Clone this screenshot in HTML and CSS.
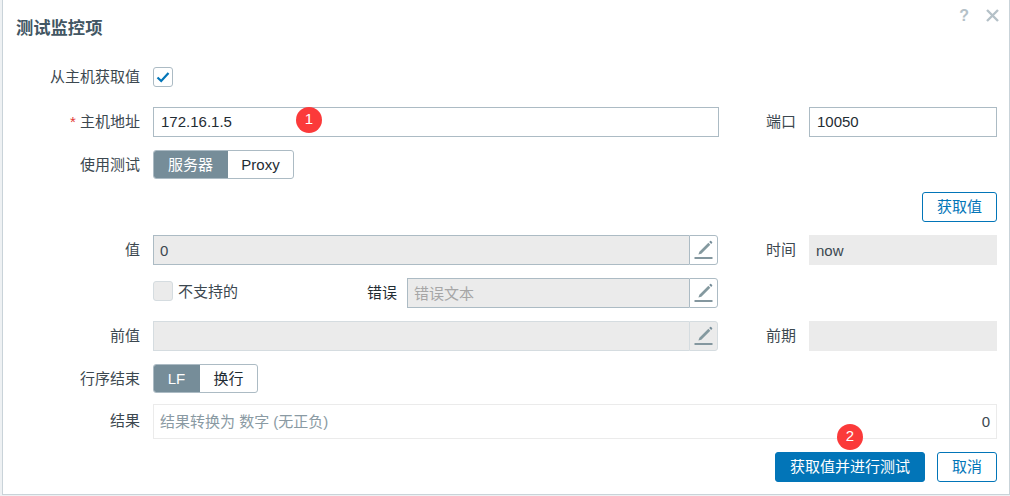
FILE: index.html
```html
<!DOCTYPE html>
<html lang="zh-CN">
<head>
<meta charset="utf-8">
<title>测试监控项</title>
<link rel="stylesheet" href="styles.css">
</head>
<body>
<svg class="sprite" width="0" height="0" aria-hidden="true">
  <symbol id="pencil" viewBox="0 0 20 20">
    <path d="M5.4 11.8 14.4 2.8l1.9 1.9L7.3 13.7l-2.9.9z" fill="#84999f"/>
    <path d="M15.2 2l.9-.9a.7.7 0 0 1 1 0l1 1a.7.7 0 0 1 0 1l-.9.9z" fill="#768d99"/>
    <rect x="0.5" y="17" width="18" height="2" fill="#84979f"/>
  </symbol>
</svg>
<main class="dialog">
  <header class="head">
    <h1 class="title">测试监控项</h1>
    <div class="head-tools">
      <span class="help">?</span>
      <svg class="close" viewBox="0 0 13 13" width="13" height="13"><path d="M1 1l11 11M12 1 1 12" stroke="#b5c1c8" stroke-width="2.4" fill="none"/></svg>
    </div>
  </header>
  <form class="form">
    <div class="row row-first">
      <label class="label">从主机获取值</label>
      <span class="check">
        <svg viewBox="0 0 14 12" width="14" height="12"><path d="M1.5 6.5 5.2 10 12.5 2" stroke="#0275b8" stroke-width="2.2" fill="none"/></svg>
      </span>
    </div>
    <div class="row">
      <label class="label"><span class="req">*</span> 主机地址</label>
      <div class="field field-main">172.16.1.5<span class="badge badge-one">1</span></div>
      <label class="label-side">端口</label>
      <div class="field field-side">10050</div>
    </div>
    <div class="row row-toggle">
      <label class="label">使用测试</label>
      <div class="toggle">
        <span class="opt opt-on opt-server">服务器</span>
        <span class="opt opt-proxy">Proxy</span>
      </div>
    </div>
    <div class="row row-end">
      <button type="button" class="btn btn-get">获取值</button>
    </div>
    <div class="row">
      <label class="label">值</label>
      <div class="combo combo-main">
        <div class="field field-off field-grow">0</div>
        <span class="pen"><svg width="20" height="20"><use href="#pencil"/></svg></span>
      </div>
      <label class="label-side">时间</label>
      <div class="field field-side field-off field-plain">now</div>
    </div>
    <div class="row">
      <span class="label"></span>
      <div class="unsupported">
        <span class="check check-off"></span>
        <span class="check-text">不支持的</span>
      </div>
      <label class="label-error">错误</label>
      <div class="combo combo-error">
        <div class="field field-off field-grow field-hint">错误文本</div>
        <span class="pen"><svg width="20" height="20"><use href="#pencil"/></svg></span>
      </div>
    </div>
    <div class="row">
      <label class="label">前值</label>
      <div class="combo combo-main combo-dim">
        <div class="field field-off field-grow field-dim"></div>
        <span class="pen pen-dim"><svg width="20" height="20"><use href="#pencil"/></svg></span>
      </div>
      <label class="label-side">前期</label>
      <div class="field field-side field-off field-plain"></div>
    </div>
    <div class="row row-toggle">
      <label class="label">行序结束</label>
      <div class="toggle">
        <span class="opt opt-on opt-lf">LF</span>
        <span class="opt opt-wrap">换行</span>
      </div>
    </div>
    <div class="row row-result">
      <label class="label label-result">结果</label>
      <div class="result">
        <span class="result-hint">结果转换为 数字 (无正负)</span>
        <span class="result-val">0</span>
      </div>
    </div>
  </form>
  <footer class="foot">
    <span class="foot-primary">
      <button type="button" class="btn btn-primary">获取值并进行测试</button>
      <span class="badge badge-two">2</span>
    </span>
    <button type="button" class="btn btn-cancel">取消</button>
  </footer>
</main>
</body>
</html>
```
FILE: styles.css
```css
* { box-sizing: border-box; }
html, body { margin: 0; padding: 0; }
body {
  width: 1010px;
  height: 496px;
  overflow: hidden;
  background: #eef1f3;
  padding: 0 0 0 2px;
  font: 15px/20px "Liberation Sans", "Noto Sans CJK SC", sans-serif;
  color: #1f2c33;
}
.sprite { position: absolute; }
.dialog {
  width: 1008px;
  height: 495px;
  background: #fff;
  border: 1px solid #c9d3d9;
  border-top: 0;
  padding: 0 12px 0 13px;
}
.head { height: 67px; position: relative; }
.title {
  margin: 0;
  padding-top: 16px;
  font-size: 17.3px;
  line-height: 24px;
  font-weight: 700;
  color: #425663;
}
.head-tools {
  position: absolute;
  right: -2px;
  top: 8px;
  display: flex;
  align-items: center;
  gap: 17px;
}
.help { color: #b5c1c8; font-size: 16px; font-weight: 700; line-height: 15px; }
.form { display: flex; flex-direction: column; gap: 13px; }
.row { display: flex; align-items: center; height: 30px; }
.row-first { height: 20px; margin-bottom: 7px; }
.row-toggle { height: 29px; }
.row-end { justify-content: flex-end; }
.row-result { height: 35px; margin-top: -2px; }
.label {
  width: 124px;
  flex: none;
  margin-right: 13px;
  text-align: right;
  color: #3c4850;
}
.label-result { align-self: flex-start; padding-top: 7px; }
.req { color: #e33734; }
.label-side {
  width: 78px;
  flex: none;
  margin-right: 12px;
  text-align: right;
  color: #3c4850;
  padding-right: 1px;
}
.field {
  position: relative;
  height: 30px;
  line-height: 27px;
  padding: 0 7px;
  border: 1px solid #acbbc4;
  background: #fff;
}
.field-main { width: 566px; }
.field-side { width: 188px; }
.field-off { background: #ebebeb; color: #3c4850; line-height: 29px; padding-left: 6px; }
.field-plain { border-color: #ebebeb; }
.field-grow { flex: 1; min-width: 0; border-right: 0; }
.field-hint { color: #a6a6a6; }
.field-dim { border-color: #d5dce0; }
.combo { display: flex; height: 30px; flex: none; }
.combo-main { width: 565px; margin-right: 1px; }
.combo-error { width: 311px; }
.pen {
  width: 29px;
  flex: none;
  display: flex;
  align-items: center;
  justify-content: center;
  border: 1px solid #acbbc4;
  border-radius: 0 3px 3px 0;
  background: #fff;
}
.pen-dim { background: #ebebeb; border-color: #d5dce0; }
.unsupported { display: flex; align-items: center; width: 204px; flex: none; height: 30px; padding-bottom: 4px; }
.check {
  width: 20px;
  height: 20px;
  flex: none;
  display: flex;
  align-items: center;
  justify-content: center;
  border: 1px solid #acbbc4;
  border-radius: 3px;
  background: #fff;
}
.check-off { background: #ebebeb; border-color: #d5dce0; }
.check-text { margin-left: 5px; color: #3c4850; line-height: 20px; margin-top: 2px; }
.label-error { width: 40px; flex: none; margin-right: 10px; text-align: right; color: #1f2c33; }
.toggle {
  display: flex;
  height: 29px;
  border: 1px solid #acbbc4;
  border-radius: 3px;
  overflow: hidden;
}
.opt { display: flex; align-items: center; justify-content: center; color: #1f2c33; }
.opt-on { background: #768d99; color: #fff; margin: -1px 0 -1px -1px; }
.opt-server { width: 75px; }
.opt-proxy { width: 65px; }
.opt-lf { width: 47px; }
.opt-wrap { width: 57px; }
.result {
  flex: none;
  width: 844px;
  height: 35px;
  display: flex;
  align-items: center;
  justify-content: space-between;
  padding: 0 6px 0 6px;
  border: 1px solid #ebebeb;
}
.result-hint { color: #8a9aa3; }
.result-val { color: #3c4850; }
.btn {
  font: inherit;
  height: 30px;
  border-radius: 3px;
  padding: 0;
  border: 1px solid #0275b8;
  background: #fff;
  color: #0275b8;
}
.btn-get { width: 75px; }
.foot {
  display: flex;
  justify-content: flex-end;
  align-items: center;
  gap: 12px;
  margin-top: 13px;
}
.foot-primary { position: relative; display: block; height: 30px; }
.btn-primary { width: 150px; background: #0275b8; color: #fff; }
.btn-cancel { width: 60px; }
.badge {
  position: absolute;
  width: 26px;
  height: 26px;
  border-radius: 50%;
  background: #fb3a3a;
  color: #fff;
  text-align: center;
  line-height: 24px;
  font-size: 15px;
}
.badge-one { left: 142px; top: -1px; }
.badge-two { left: 62px; top: -28px; }
```
